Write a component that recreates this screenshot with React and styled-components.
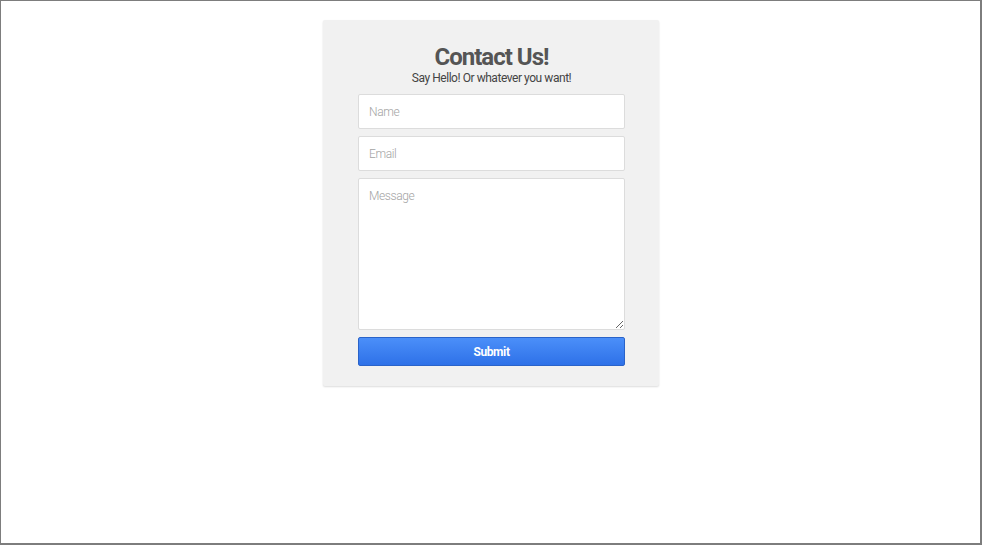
import React from 'react';
import styled, { createGlobalStyle } from 'styled-components';

const GlobalStyle = createGlobalStyle`
  html, body {
    margin: 0;
    padding: 0;
    background: #fff;
  }
  body {
    font-family: Roboto, "Liberation Sans", sans-serif;
  }
`;

const Frame = styled.div`
  box-sizing: border-box;
  width: 100vw;
  height: 100vh;
  border: 1px solid #7d7d7d;
  border-right-width: 2px;
  border-bottom-width: 2px;
  padding-top: 19px;
  display: flex;
  flex-direction: column;
  align-items: center;
`;

const Card = styled.form`
  box-sizing: border-box;
  width: 336px;
  padding: 25px 34px 20px 35px;
  background: #f1f1f1;
  border-radius: 2px;
  box-shadow: 0 1px 2px rgba(0, 0, 0, 0.14);
  display: flex;
  flex-direction: column;
  margin-left: 1px;
`;

const Title = styled.h2`
  margin: 0;
  font-size: 24px;
  line-height: 25px;
  letter-spacing: -1px;
  font-weight: 700;
  color: #555;
  text-align: center;
`;

const Subtitle = styled.p`
  margin: 0 0 8px;
  font-size: 12px;
  line-height: 16px;
  letter-spacing: -0.45px;
  color: #444;
  text-align: center;
`;

const Field = styled.input`
  box-sizing: border-box;
  width: 100%;
  height: ${p => p.$h || 35}px;
  margin-bottom: 7px;
  padding: 0 10px;
  border: 1px solid #dcdcdc;
  border-radius: 2px;
  background: #fff;
  font-family: Roboto, "Liberation Sans", sans-serif;
  font-size: 12px;
  letter-spacing: -0.4px;
  font-weight: 300;
  color: #333;
  outline: none;
  &::placeholder {
    color: #a3a3a3;
  }
`;

const Area = styled(Field).attrs({ as: 'textarea' })`
  padding: 10px 10px;
  resize: vertical;
  display: block;
`;

const Submit = styled.button`
  box-sizing: border-box;
  width: 100%;
  height: 29px;
  border: 1px solid #2a63c9;
  border-radius: 2px;
  background: linear-gradient(#4b8ff9, #2e71e8);
  color: #fff;
  font-family: Roboto, "Liberation Sans", sans-serif;
  font-size: 12px;
  letter-spacing: -0.4px;
  font-weight: 700;
  cursor: pointer;
`;

export default function App() {
  return (
    <>
      <GlobalStyle />
      <Frame>
        <Card onSubmit={e => e.preventDefault()}>
          <Title>Contact Us!</Title>
          <Subtitle>Say Hello! Or whatever you want!</Subtitle>
          <Field type="text" placeholder="Name" />
          <Field type="email" placeholder="Email" />
          <Area placeholder="Message" $h={152} />
          <Submit type="submit">Submit</Submit>
        </Card>
      </Frame>
    </>
  );
}
